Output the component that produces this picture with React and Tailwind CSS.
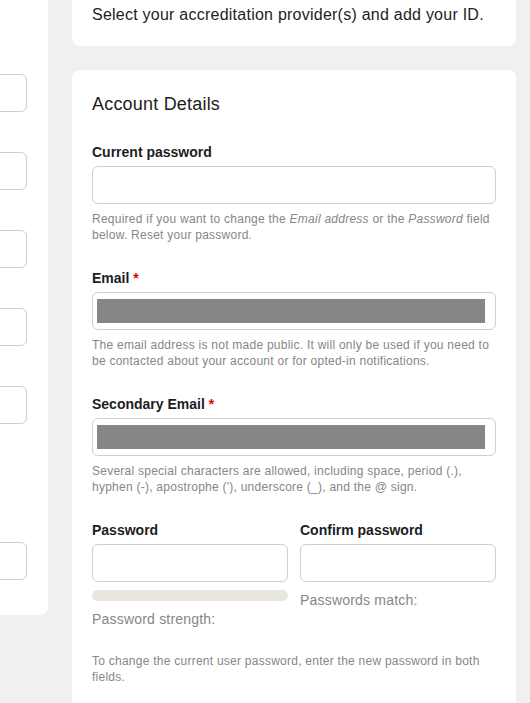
const leftInputs = [74, 152, 230, 308, 386, null, 542];

const Label = ({ children, required }) => (
  <label className="block text-[14px] leading-5 font-semibold text-[#1d1d1f]">
    {children}
    {required && <span className="ml-1 text-[#e00000]">*</span>}
  </label>
);

const Help = ({ children }) => (
  <p className="mt-[7px] text-[12px] leading-4 tracking-[0.25px] text-[#86868b]">{children}</p>
);

const Input = ({ masked }) => (
  <div className="mt-1 h-[38px] rounded-md border border-[#cfcfcf] bg-white px-1 flex items-center">
    {masked && <div className="h-6 w-full mr-[6px] bg-[#868686]" />}
  </div>
);

const App = () => {
  return (
    <div
      className="min-h-[703px] bg-[#f0f0f0] flex gap-6 overflow-hidden"
      style={{ fontFamily: "'Liberation Sans', Arial, sans-serif" }}
    >
      <aside className="w-[48px] shrink-0 h-[615px] bg-white rounded-br-lg overflow-hidden pt-[74px] flex flex-col gap-10 items-end pr-[21px]">
        {leftInputs.map((v, i) =>
          v === null ? (
            <div key={i} className="h-[38px] w-[200px]" />
          ) : (
            <div
              key={i}
              className="h-[38px] w-[200px] shrink-0 rounded-md border border-[#cfcfcf] bg-white"
            />
          )
        )}
      </aside>

      <main className="w-[444px] shrink-0 flex flex-col gap-6">
        <section className="bg-white rounded-b-lg px-5 pt-[3px] pb-[19px]">
          <p className="text-[16px] leading-6 tracking-[0.24px] text-[#1d1d1f]">
            Select your accreditation provider(s) and add your ID.
          </p>
        </section>

        <section className="bg-white rounded-t-lg px-5 pt-5 pb-8">
          <h2 className="text-[18px] leading-7 tracking-[0.2px] text-[#1d1d1f]">Account Details</h2>

          <div className="mt-6">
            <Label>Current password</Label>
            <Input />
            <Help>
              Required if you want to change the <em>Email address</em> or the{" "}
              <em>Password</em> field below. Reset your password.
            </Help>
          </div>

          <div className="mt-[25px]">
            <Label required>Email</Label>
            <Input masked />
            <Help>
              The email address is not made public. It will only be used if you need to be
              contacted about your account or for opted-in notifications.
            </Help>
          </div>

          <div className="mt-[25px]">
            <Label required>Secondary Email</Label>
            <Input masked />
            <Help>
              Several special characters are allowed, including space, period (.), hyphen
              (-), apostrophe ('), underscore (_), and the @ sign.
            </Help>
          </div>

          <div className="mt-[25px] grid grid-cols-2 gap-3">
            <div>
              <Label>Password</Label>
              <Input />
              <div className="mt-2 h-[11px] rounded-full bg-[#e8e6df]" />
              <p className="mt-2 text-[14px] leading-5 tracking-[0.2px] text-[#86868b]">
                Password strength:
              </p>
            </div>
            <div>
              <Label>Confirm password</Label>
              <Input />
              <p className="mt-2 text-[14px] leading-5 tracking-[0.2px] text-[#86868b]">
                Passwords match:
              </p>
            </div>
          </div>

          <p className="mt-6 text-[12px] leading-4 tracking-[0.25px] text-[#86868b]">
            To change the current user password, enter the new password in both fields.
          </p>
        </section>
      </main>
    </div>
  );
};

export default App;
